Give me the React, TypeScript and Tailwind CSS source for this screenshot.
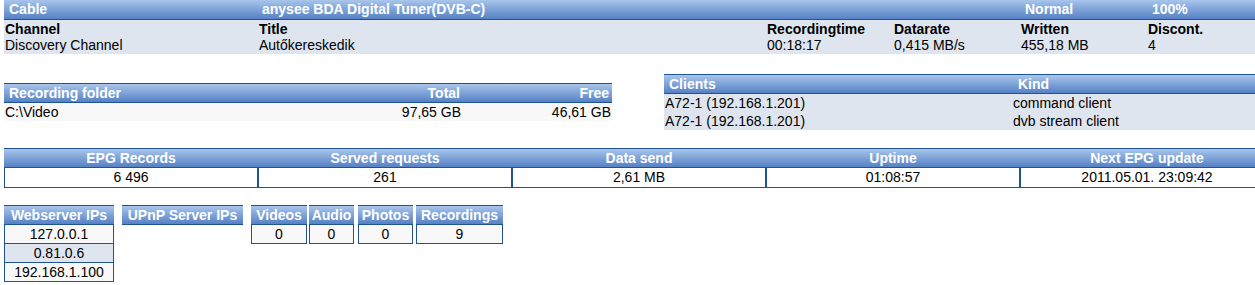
import React from "react";

const HDR =
  "bg-linear-to-b from-[#a9c5eb] to-[#5581c4] text-white font-bold text-[14px] leading-[18px] h-[18px] whitespace-nowrap";
const DARK = "border-[#1f5494]";

function Box({
  title,
  rows,
  width,
  className = "",
}: {
  title: string;
  rows: { v: string; bg: string }[];
  width: string;
  className?: string;
}) {
  return (
    <div className={`${width} ${className} flex flex-col`}>
      <div className={`${HDR} border-t border-b ${DARK} text-center h-[20px] leading-[18px] overflow-hidden`}>
        {title}
      </div>
      {rows.map((r, i) => (
        <div
          key={i}
          className={`${r.bg} border-l border-r border-b ${DARK} text-center h-[19px] leading-[18px] text-[14px]`}
        >
          {r.v}
        </div>
      ))}
    </div>
  );
}

export default function App() {
  const W = "bg-[#f8f8f8]";
  const G = "bg-[#dfe5ee]";
  return (
    <div
      className="w-[1255px] h-[285px] overflow-hidden bg-white text-black"
      style={{ fontFamily: '"Liberation Sans", Arial, sans-serif' }}
    >
      <div className="w-[1270px] ml-[4px]">
        {/* Top table */}
        <div>
          <div className={`grid grid-cols-10 ${HDR} h-[20px] border-b ${DARK}`}>
            <div className="col-span-2 pl-[5px]">Cable</div>
            <div className="col-span-6 pl-[4px]">anysee BDA Digital Tuner(DVB-C)</div>
            <div className="pl-[5px]">Normal</div>
            <div className="pl-[5px]">100%</div>
          </div>
          <div className={`${G} text-[14px] leading-[16px] pt-[1px] pb-[1px]`}>
            <div className="grid grid-cols-10 font-bold h-[16px]">
              <div className="col-span-2 pl-[1px]">Channel</div>
              <div className="col-span-4 pl-[1px]">Title</div>
              <div className="pl-[1px]">Recordingtime</div>
              <div className="pl-[1px]">Datarate</div>
              <div className="pl-[1px]">Written</div>
              <div className="pl-[1px]">Discont.</div>
            </div>
            <div className="grid grid-cols-10 h-[16px]">
              <div className="col-span-2 pl-[1px]">Discovery Channel</div>
              <div className="col-span-4 pl-[1px]">Autőkereskedik</div>
              <div className="pl-[1px]">00:18:17</div>
              <div className="pl-[1px]">0,415 MB/s</div>
              <div className="pl-[1px]">455,18 MB</div>
              <div className="pl-[1px]">4</div>
            </div>
          </div>
        </div>

        {/* Section 2 */}
        <div className="flex items-center mt-[20px]">
          <div className="w-[608px]">
            <div className={`grid grid-cols-[307px_150px_151px] ${HDR} h-[20px] border-t border-b ${DARK}`}>
              <div className="pl-[5px]">Recording folder</div>
              <div className="text-right pr-[1px]">Total</div>
              <div className="text-right pr-[3px]">Free</div>
            </div>
            <div className={`grid grid-cols-[307px_150px_151px] ${W} text-[14px] leading-[18px] h-[18px]`}>
              <div className="pl-[1px]">C:\Video</div>
              <div className="text-right">97,65 GB</div>
              <div className="text-right pr-[1px]">46,61 GB</div>
            </div>
          </div>
          <div className="ml-[52px] flex-1">
            <div className={`grid grid-cols-[348px_1fr] ${HDR} h-[20px] border-t border-b ${DARK}`}>
              <div className="pl-[5px]">Clients</div>
              <div className="pl-[6px]">Kind</div>
            </div>
            <div className={`${G} text-[14px] leading-[18px]`}>
              <div className="grid grid-cols-[348px_1fr] h-[18px]">
                <div className="pl-[1px]">A72-1 (192.168.1.201)</div>
                <div className="pl-[1px]">command client</div>
              </div>
              <div className="grid grid-cols-[348px_1fr] h-[18px]">
                <div className="pl-[1px]">A72-1 (192.168.1.201)</div>
                <div className="pl-[1px]">dvb stream client</div>
              </div>
            </div>
          </div>
        </div>

        {/* EPG table */}
        <div className="mt-[18px]">
          <div className={`grid grid-cols-5 ${HDR} h-[20px] border-t border-b ${DARK} text-center`}>
            <div>EPG Records</div>
            <div>Served requests</div>
            <div>Data send</div>
            <div>Uptime</div>
            <div>Next EPG update</div>
          </div>
          <div className="grid grid-cols-5 bg-white text-[14px] leading-[18px] text-center">
            {["6 496", "261", "2,61 MB", "01:08:57", "2011.05.01. 23:09:42"].map((v, i) => (
              <div key={i} className={`border-l border-r border-b ${DARK} h-[20px] leading-[19px]`}>
                {v}
              </div>
            ))}
          </div>
        </div>

        {/* Bottom boxes */}
        <div className="flex items-start mt-[17px]">
          <Box
            title="Webserver IPs"
            width="w-[110px]"
            rows={[
              { v: "127.0.0.1", bg: W },
              { v: "0.81.0.6", bg: G },
              { v: "192.168.1.100", bg: W },
            ]}
          />
          <Box title="UPnP Server IPs" width="w-[121px]" className="ml-[8px]" rows={[]} />
          <Box title="Videos" width="w-[56px]" className="ml-[8px]" rows={[{ v: "0", bg: W }]} />
          <Box title="Audio" width="w-[45px]" className="ml-[2px]" rows={[{ v: "0", bg: W }]} />
          <Box title="Photos" width="w-[55px]" className="ml-[4px]" rows={[{ v: "0", bg: W }]} />
          <Box title="Recordings" width="w-[87px]" className="ml-[3px]" rows={[{ v: "9", bg: W }]} />
        </div>
      </div>
    </div>
  );
}
